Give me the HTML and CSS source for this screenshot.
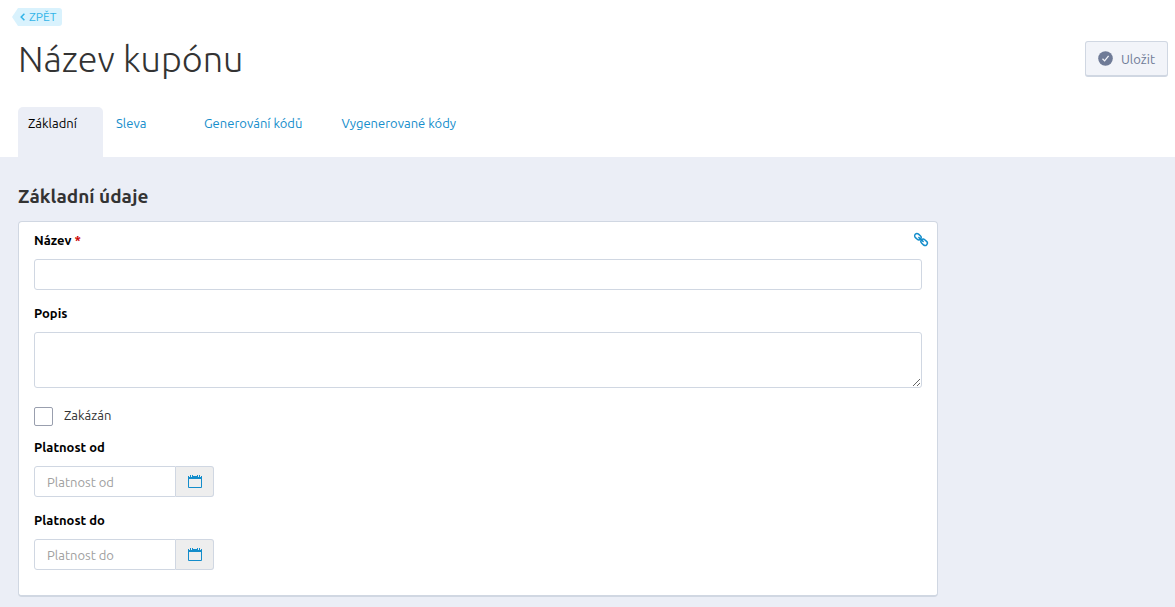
FILE: index.html
```html
<!DOCTYPE html>
<html lang="cs">
<head>
<meta charset="utf-8">
<meta name="viewport" content="width=device-width, initial-scale=1">
<title>Název kupónu</title>
<link rel="stylesheet" href="styles.css">
</head>
<body>
<header class="header">
  <a class="back" href="#"><svg class="back-icon" viewBox="0 0 6 8" aria-hidden="true"><path d="M4.4.8 1.2 4l3.2 3.2"/></svg>ZPĚT</a>
  <div class="title-row">
    <h1 class="title">Název kupónu</h1>
    <button class="save" type="submit" form="coupon"><svg class="save-icon" viewBox="0 0 15 15" aria-hidden="true"><circle cx="7.5" cy="7.5" r="7.3"/><path d="m4.5 7.8 2.1 2.1 4-5"/></svg>Uložit</button>
  </div>
  <nav class="tabs">
    <a class="tab tab-active" href="#" aria-current="page">Základní</a>
    <a class="tab" href="#">Sleva</a>
    <a class="tab" href="#">Generování kódů</a>
    <a class="tab" href="#">Vygenerované kódy</a>
  </nav>
</header>
<main class="content">
  <h2 class="section-title">Základní údaje</h2>
  <form class="card" id="coupon">
    <div class="field">
      <div class="label-row">
        <label class="label" for="name">Název <span class="required">*</span></label>
        <a class="link" href="#" aria-label="Odkaz"><svg class="link-icon" viewBox="0 0 16 16" aria-hidden="true"><g transform="translate(0 -.5) rotate(42 8 8)"><rect x="0.3" y="5.7" width="7" height="4.6" rx="2.3"/><rect x="8.7" y="5.7" width="7" height="4.6" rx="2.3"/><path d="M4.5 8h7"/></g></svg></a>
      </div>
      <input class="input" id="name" type="text" required>
    </div>
    <div class="field">
      <label class="label" for="description">Popis</label>
      <textarea class="input textarea" id="description"></textarea>
    </div>
    <label class="check"><input class="checkbox" type="checkbox"><span class="check-text">Zakázán</span></label>
    <div class="field">
      <label class="label" for="from">Platnost od</label>
      <div class="date">
        <input class="input date-input" id="from" type="text" placeholder="Platnost od">
        <button class="date-button" type="button" aria-label="Vybrat datum od"><svg class="date-icon" viewBox="0 0 14 14" aria-hidden="true"><path class="date-head" d="M0 1h1v1h3V1h6v1h3V1h1v3H0z"/><path class="date-ring" d="M2 0h1v2H2zM4 0h1v2H4zM9 0h1v2H9zM11 0h1v2h-1z"/><path class="date-frame" d="M.5 4v8.5h13V4"/></svg></button>
      </div>
    </div>
    <div class="field">
      <label class="label" for="to">Platnost do</label>
      <div class="date">
        <input class="input date-input" id="to" type="text" placeholder="Platnost do">
        <button class="date-button" type="button" aria-label="Vybrat datum do"><svg class="date-icon" viewBox="0 0 14 14" aria-hidden="true"><path class="date-head" d="M0 1h1v1h3V1h6v1h3V1h1v3H0z"/><path class="date-ring" d="M2 0h1v2H2zM4 0h1v2H4zM9 0h1v2H9zM11 0h1v2h-1z"/><path class="date-frame" d="M.5 4v8.5h13V4"/></svg></button>
      </div>
    </div>
  </form>
</main>
</body>
</html>
```
FILE: styles.css
```css
* {
  box-sizing: border-box;
}

body {
  margin: 0;
  min-height: 100vh;
  background: #ebeef6;
  color: #333;
  font: 13px/20px Ubuntu, "Noto Sans", sans-serif;
}

button,
input,
textarea {
  font: inherit;
}

a {
  color: #148dcb;
  text-decoration: none;
}

.header {
  display: flex;
  flex-direction: column;
  align-items: flex-start;
  padding: 8px 7px 0 18px;
  background: #fff;
}

.back {
  display: flex;
  align-items: center;
  gap: 3px;
  height: 18px;
  margin-left: -6px;
  padding: 0 6px 0 8px;
  border-radius: 0 3px 3px 0;
  background: #d9f2fd;
  clip-path: polygon(6px 0, 100% 0, 100% 100%, 6px 100%, 0 50%);
  color: #32b4e8;
  font-size: 12px;
}

.back-icon {
  width: 6px;
  height: 8px;
  fill: none;
  stroke: currentColor;
  stroke-width: 1.5;
}

.title-row {
  display: flex;
  align-items: center;
  justify-content: space-between;
  align-self: stretch;
  height: 66px;
}

.title {
  margin: 0;
  font-size: 36px;
  font-weight: 300;
  line-height: 48px;
}

.save {
  display: flex;
  align-items: center;
  gap: 8px;
  height: 36px;
  padding: 0 12px;
  border: 1px solid #d0d7e2;
  border-bottom-width: 2px;
  border-radius: 3px;
  background: #f2f4f9;
  color: #6f7b97;
}

.save-icon {
  width: 15px;
  height: 15px;
  fill: #6f7b97;
}

.save-icon path {
  fill: none;
  stroke: #f2f4f9;
  stroke-width: 1.3;
}

.tabs {
  display: flex;
  gap: 3px;
  margin-top: 15px;
}

.tab {
  min-width: 85px;
  height: 50px;
  padding: 6px 26px 0 10px;
  border-radius: 5px 5px 0 0;
}

.tab-active {
  background: #ebeef6;
  color: #000;
}

.content {
  padding: 27px 18px 11px;
}

.section-title {
  margin: 0 0 13px;
  font-size: 19px;
  font-weight: 700;
  line-height: 24px;
}

.card {
  display: flex;
  flex-direction: column;
  gap: 13px;
  max-width: 920px;
  padding: 8px 15px 25px;
  border: 1px solid #d0d7e2;
  border-bottom-width: 2px;
  border-radius: 4px;
  background: #fff;
}

.field {
  display: flex;
  flex-direction: column;
  gap: 9px;
}

.label-row {
  display: flex;
  justify-content: space-between;
}

.label {
  color: #000;
  font-weight: 700;
}

.required {
  color: #c00;
}

.link {
  display: flex;
  align-items: center;
  height: 20px;
  margin-right: -7px;
}

.link-icon {
  width: 16px;
  height: 16px;
  fill: none;
  stroke: currentColor;
  stroke-width: 1.5;
}

.input {
  width: 100%;
  height: 31px;
  padding: 4px 12px;
  border: 1px solid #d0d7e2;
  border-radius: 3px;
  background: #fff;
  color: #333;
}

.input::placeholder {
  color: #a0a0a0;
}

.textarea {
  display: block;
  height: 56px;
  resize: vertical;
}

.check {
  display: flex;
  align-items: flex-end;
  align-self: flex-start;
  gap: 11px;
  margin: 4px 0 -2px;
}

.check-text {
  padding-bottom: 1px;
}

.checkbox {
  appearance: none;
  width: 19px;
  height: 19px;
  margin: 0;
  border: 1px solid #999fae;
  border-radius: 2px;
  background: #fff;
}

.checkbox:checked {
  background: #148dcb;
}

.date {
  display: flex;
  width: 180px;
}

.date-input {
  flex: 1;
  min-width: 0;
  border-radius: 3px 0 0 3px;
}

.date-button {
  display: flex;
  align-items: center;
  justify-content: center;
  width: 38px;
  padding: 0;
  border: 1px solid #d0d7e2;
  border-left: 0;
  border-radius: 0 3px 3px 0;
  background: #eee;
  color: #148dcb;
}

.date-icon {
  width: 14px;
  height: 14px;
}

.date-head,
.date-ring {
  fill: currentColor;
}

.date-frame {
  fill: none;
  stroke: currentColor;
}
```
